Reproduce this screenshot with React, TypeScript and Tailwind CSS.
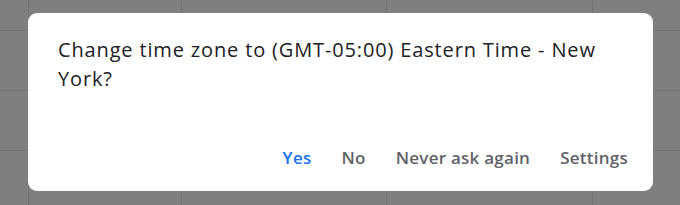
export default function App() {
  const cols = [28, 181, 386, 592]
  const rows = [30, 90, 150]
  return (
    <div className="relative w-[680px] h-[205px] overflow-hidden bg-[#7f7f7f]" style={{ fontFamily: '"Open Sans", "Liberation Sans", sans-serif' }}>
      {/* calendar grid behind the scrim */}
      {cols.map((x) => (
        <div key={x} className="absolute top-0 bottom-0 w-px bg-[#737373]" style={{ left: x }} />
      ))}
      {rows.map((y) => (
        <div key={y} className="absolute left-0 right-0 h-px bg-[#737373]" style={{ top: y }} />
      ))}

      <div className="absolute left-[28px] top-[13px] w-[625px] h-[178px] bg-white rounded-[9px] flex flex-col pl-[30px] pr-[25px] pt-[22px] pb-[21px]">
        <p className="w-[540px] text-[20px] leading-[29px] tracking-[0.85px] text-[#202124] font-medium">
          Change time zone to (GMT-05:00) Eastern Time - New York?
        </p>
        <div className="mt-auto flex justify-end items-center gap-[30px] text-[17px] tracking-[0.25px] font-semibold text-[#5f6368]">
          <button className="text-[#1a73e8]">Yes</button>
          <button>No</button>
          <button>Never ask again</button>
          <button>Settings</button>
        </div>
      </div>
    </div>
  )
}
